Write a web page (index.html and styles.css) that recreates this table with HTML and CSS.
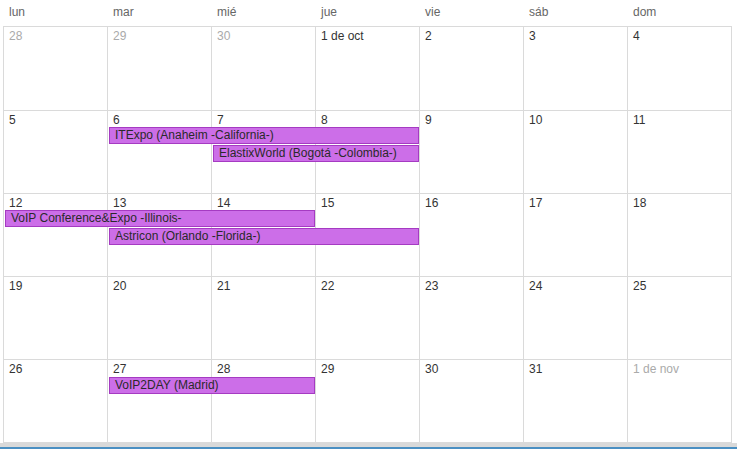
FILE: index.html
```html
<!DOCTYPE html>
<html lang="es">
<head>
<meta charset="utf-8">
<link rel="stylesheet" href="styles.css">
</head>
<body>
<div class="cal">
  <div class="head">
    <div class="dn">lun</div><div class="dn">mar</div><div class="dn">mié</div><div class="dn">jue</div><div class="dn">vie</div><div class="dn">sáb</div><div class="dn">dom</div>
  </div>
  <div class="weeks">
    <div class="week first">
      <div class="cell c1"></div><div class="cell c2"></div><div class="cell c3"></div><div class="cell c4"></div><div class="cell c5"></div><div class="cell c6"></div><div class="cell c7"></div>
      <div class="num c1 other">28</div><div class="num c2 other">29</div><div class="num c3 other">30</div><div class="num c4">1 de oct</div><div class="num c5">2</div><div class="num c6">3</div><div class="num c7">4</div>
    </div>
    <div class="week">
      <div class="cell c1"></div><div class="cell c2"></div><div class="cell c3"></div><div class="cell c4"></div><div class="cell c5"></div><div class="cell c6"></div><div class="cell c7"></div>
      <div class="num c1">5</div><div class="num c2">6</div><div class="num c3">7</div><div class="num c4">8</div><div class="num c5">9</div><div class="num c6">10</div><div class="num c7">11</div>
      <div class="ev r1 s2 w3">ITExpo (Anaheim -California-)</div>
      <div class="ev r2 s3 w2">ElastixWorld (Bogotá -Colombia-)</div>
    </div>
    <div class="week">
      <div class="cell c1"></div><div class="cell c2"></div><div class="cell c3"></div><div class="cell c4"></div><div class="cell c5"></div><div class="cell c6"></div><div class="cell c7"></div>
      <div class="num c1">12</div><div class="num c2">13</div><div class="num c3">14</div><div class="num c4">15</div><div class="num c5">16</div><div class="num c6">17</div><div class="num c7">18</div>
      <div class="ev r1 s1 w3">VoIP Conference&amp;Expo -Illinois-</div>
      <div class="ev r2 s2 w3">Astricon (Orlando -Florida-)</div>
    </div>
    <div class="week">
      <div class="cell c1"></div><div class="cell c2"></div><div class="cell c3"></div><div class="cell c4"></div><div class="cell c5"></div><div class="cell c6"></div><div class="cell c7"></div>
      <div class="num c1">19</div><div class="num c2">20</div><div class="num c3">21</div><div class="num c4">22</div><div class="num c5">23</div><div class="num c6">24</div><div class="num c7">25</div>
    </div>
    <div class="week last">
      <div class="cell c1"></div><div class="cell c2"></div><div class="cell c3"></div><div class="cell c4"></div><div class="cell c5"></div><div class="cell c6"></div><div class="cell c7"></div>
      <div class="num c1">26</div><div class="num c2">27</div><div class="num c3">28</div><div class="num c4">29</div><div class="num c5">30</div><div class="num c6">31</div><div class="num c7 other">1 de nov</div>
      <div class="ev r1 s2 w2">VoIP2DAY (Madrid)</div>
    </div>
  </div>
  <div class="foot"></div>
</div>
</body>
</html>
```
FILE: styles.css
```css
html, body {
  margin: 0;
  padding: 0;
  background: #fff;
}
body {
  font-family: "Liberation Sans", Arial, sans-serif;
  font-size: 12px;
  color: #333;
}
.cal {
  width: 737px;
}
.head {
  display: grid;
  grid-template-columns: repeat(7, 104px);
  margin-left: 4px;
  height: 26px;
}
.dn {
  padding: 5px 0 0 5px;
  color: #666;
  font-size: 12px;
  line-height: 14px;
}
.weeks {
  margin-left: 3px;
  width: 729px;
}
.week {
  display: grid;
  grid-template-columns: repeat(7, 104px);
  grid-template-rows: 16px 18px 18px 1fr;
  height: 82px;
  border-left: 1px solid #dadada;
  border-bottom: 1px solid #dadada;
}
.week.first {
  height: 83px;
  border-top: 1px solid #dadada;
}
.week.last {
  grid-template-rows: 17px 18px 18px 1fr;
}
.cell {
  grid-row: 1 / -1;
  border-right: 1px solid #dadada;
}
.c1 { grid-column: 1; }
.c2 { grid-column: 2; }
.c3 { grid-column: 3; }
.c4 { grid-column: 4; }
.c5 { grid-column: 5; }
.c6 { grid-column: 6; }
.c7 { grid-column: 7; }
.num {
  grid-row: 1;
  padding: 3px 0 0 5px;
  line-height: 13px;
  font-size: 12px;
  color: #333;
}
.num.other {
  color: #aaa;
}
.ev {
  height: 15px;
  line-height: 15px;
  margin: 0 1px 0 1px;
  padding-left: 5px;
  background: #cc6ee8;
  border: 1px solid #a53bc2;
  color: #2a2a2a;
  font-size: 12px;
  white-space: nowrap;
  overflow: hidden;
}
.r1 { grid-row: 2; }
.r2 { grid-row: 3; }
.s1.w3 { grid-column: 1 / span 3; }
.s2.w3 { grid-column: 2 / span 3; }
.s3.w2 { grid-column: 3 / span 2; }
.s2.w2 { grid-column: 2 / span 2; }
.foot {
  height: 4px;
  background: #d9d9d9;
  border-bottom: 2px solid #4a8fc2;
}
```
